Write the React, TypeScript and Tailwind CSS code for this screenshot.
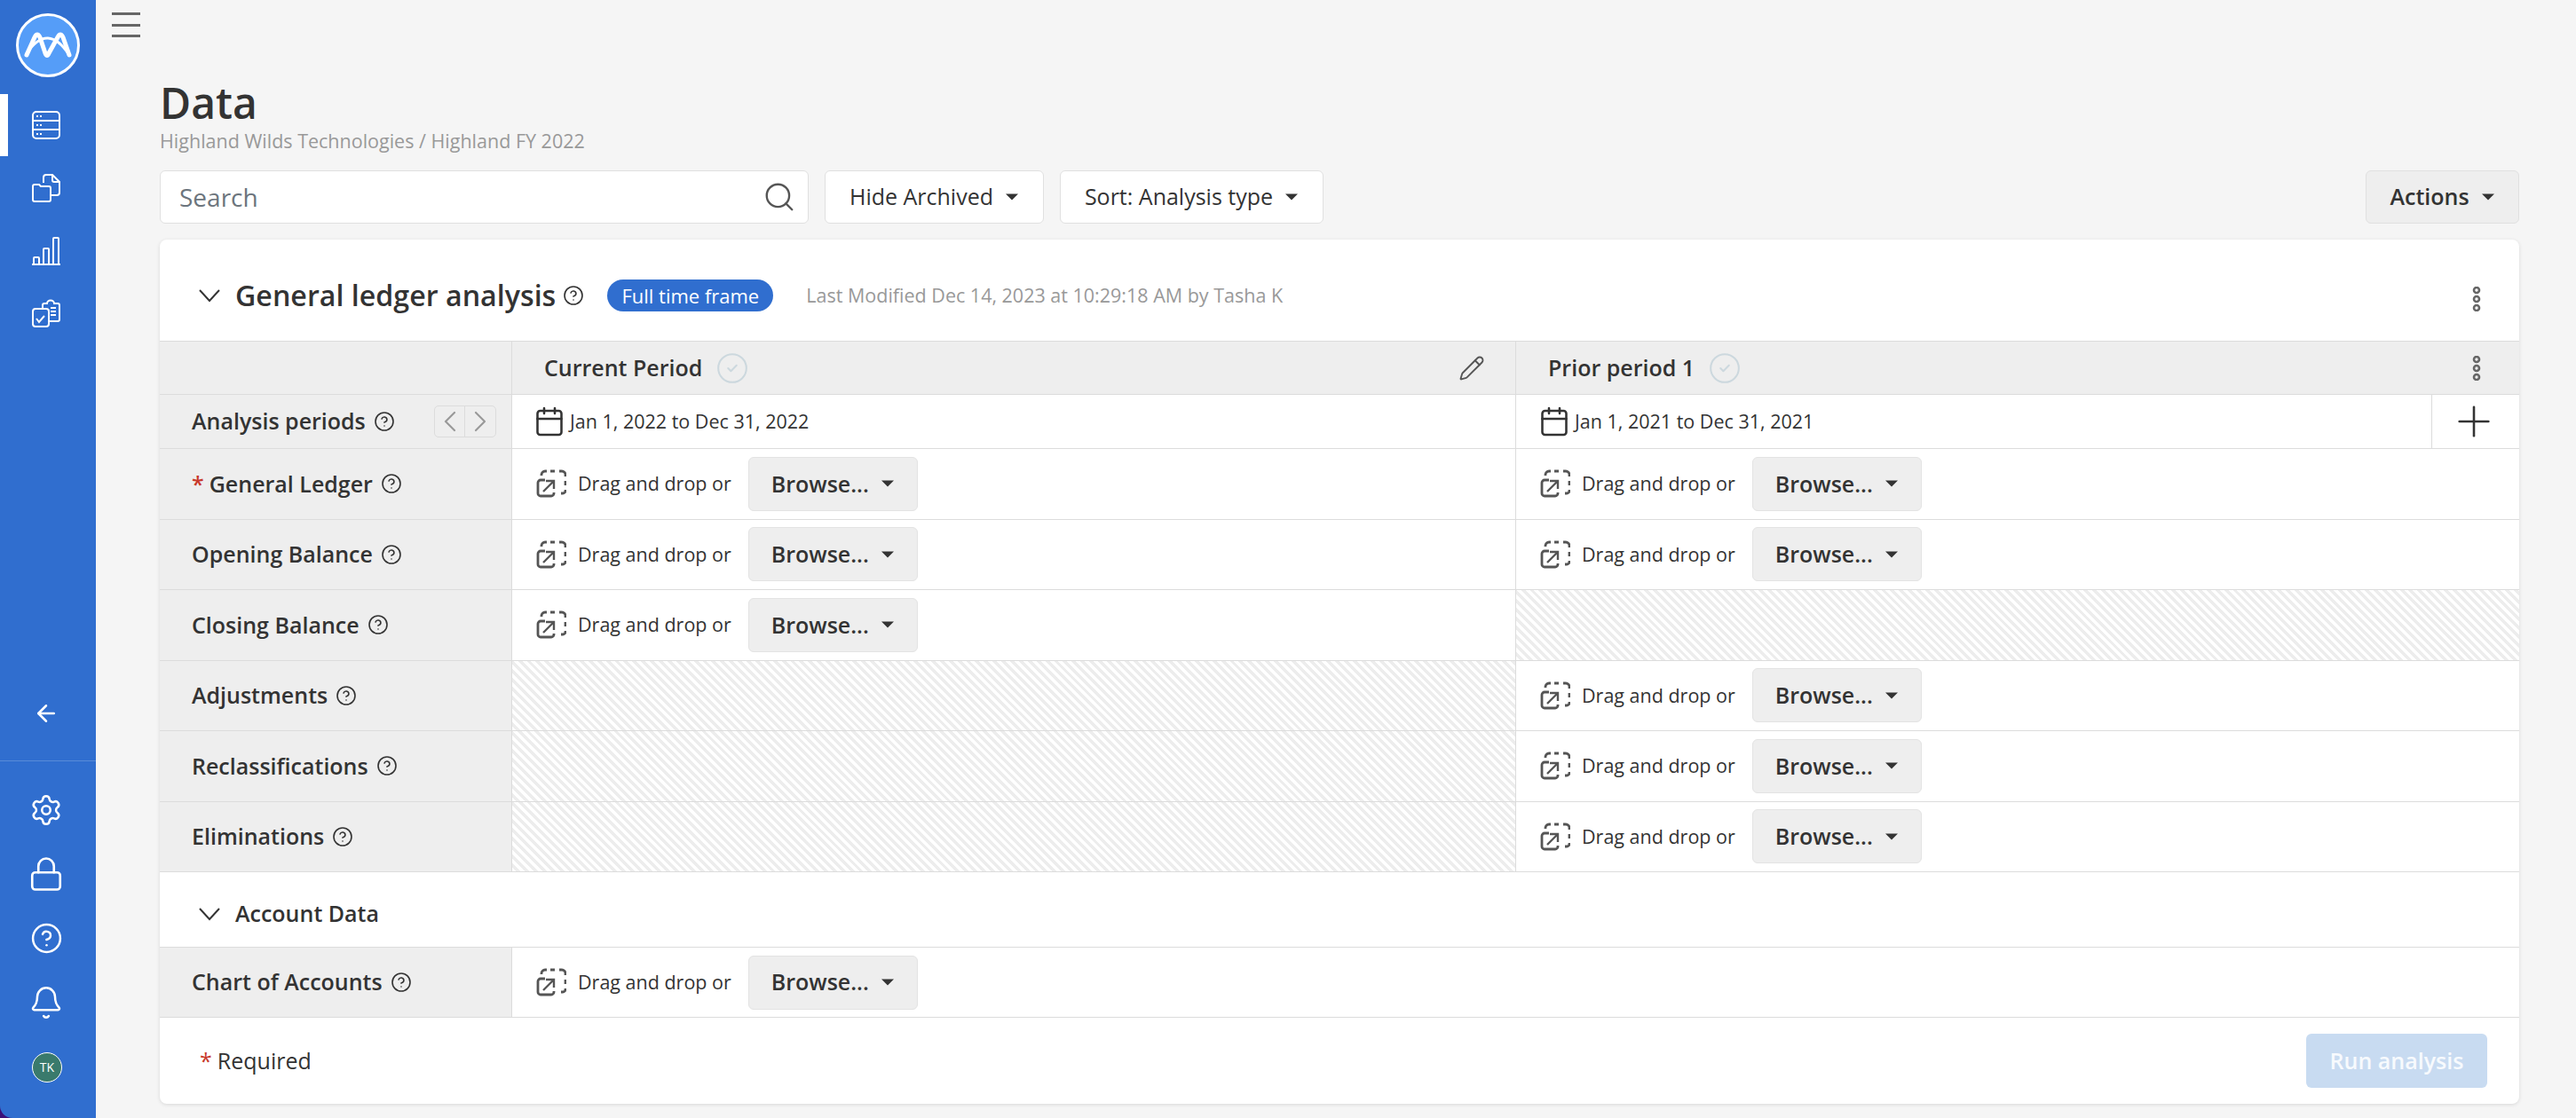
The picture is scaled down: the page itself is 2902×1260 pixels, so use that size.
import { ArrowLeft, Bell, Calendar, ChevronLeft, ChevronRight, CircleCheck, CircleHelp, Lock, Pencil, Plus, Search, Settings } from "lucide-react";

const Caret = () => (
  <svg width="16" height="8" viewBox="0 0 16 8" className="shrink-0">
    <polygon points="1,0.5 15,0.5 8,7.5" fill="#333" />
  </svg>
);

const Chevron = () => (
  <svg width="24" height="16" viewBox="0 0 24 16" fill="none" stroke="#333" strokeWidth="2" className="shrink-0">
    <polyline points="1,2 12,14 23,2" />
  </svg>
);

const Kebab = () => (
  <svg width="10" height="28" viewBox="0 0 10 28" fill="none" stroke="#666" strokeWidth="2.6" className="shrink-0">
    <circle cx="5" cy="4" r="3" />
    <circle cx="5" cy="14" r="3" />
    <circle cx="5" cy="24" r="3" />
  </svg>
);

const Help = () => <CircleHelp size={24} strokeWidth={1.6} color="#333" className="shrink-0" />;

const DropIcon = () => (
  <svg width="34" height="32" viewBox="0 0 34 32" fill="none" stroke="#555" strokeWidth="2.8" className="shrink-0">
    <path d="M6 7V6a4 4 0 0 1 4-4h2M16 2h5M26 2h3a4 4 0 0 1 4 4v2M33 13v5M33 23v1a3 3 0 0 1-3 3h-2" />
    <path d="M10 12H5a3 3 0 0 0-3 3v12a3 3 0 0 0 3 3h12a3 3 0 0 0 3-3v-1" />
    <path d="M8 25L20 13M11 13h9v9" strokeWidth="2.4" />
  </svg>
);

const Drop = () => (
  <div className="flex items-center">
    <DropIcon />
    <span className="ml-[13px] text-[21.5px] text-[#333]">Drag and drop or</span>
    <button className="ml-[19px] flex h-[61px] w-[191px] items-center justify-center gap-[13px] rounded-[6px] border border-[#e3e3e3] bg-[#eeeeee] text-[25px] font-semibold text-[#333]">
      Browse...
      <Caret />
    </button>
  </div>
);

const Hatch = () => (
  <div className="h-full w-full bg-[repeating-linear-gradient(45deg,#ffffff_0px,#ffffff_3.5px,#ededed_3.5px,#ededed_7px)]" />
);

const Cell = ({ kind }: { kind: string }) => {
  if (kind === "hatch") return <div className="h-full border-r border-[#dcdcdc] last:border-r-0"><Hatch /></div>;
  return (
    <div className="flex h-full items-center border-r border-[#dcdcdc] pl-[27px] last:border-r-0">
      <Drop />
    </div>
  );
};

const Label = ({ text, required }: { text: string; required?: boolean }) => (
  <div className="flex h-full items-center border-r border-[#dcdcdc] bg-[#eeeeee] pl-[36px] text-[25px] font-semibold text-[#333]">
    {required && <span className="mr-[6px] text-[#c8392b]">*</span>}
    {text}
    <span className="ml-[9px]"><Help /></span>
  </div>
);

const rows = [
  { label: "General Ledger", required: true, a: "drop", b: "drop" },
  { label: "Opening Balance", a: "drop", b: "drop" },
  { label: "Closing Balance", a: "drop", b: "hatch" },
  { label: "Adjustments", a: "hatch", b: "drop" },
  { label: "Reclassifications", a: "hatch", b: "drop" },
  { label: "Eliminations", a: "hatch", b: "drop" },
];

const PeriodDate = ({ text }: { text: string }) => (
  <div className="flex items-center gap-[5px] text-[21.5px] text-[#333]">
    <Calendar size={36} strokeWidth={1.7} color="#333" className="shrink-0" />
    {text}
  </div>
);

const Toolbar = () => (
  <div className="mt-[18px] flex h-[60px] gap-[18px]">
    <div className="flex w-[731px] items-center justify-between rounded-[6px] border border-[#e0e0e0] bg-white pl-[21px] pr-[13px]">
      <span className="text-[28px] text-[#6c757d]">Search</span>
      <Search size={38} strokeWidth={1.5} color="#555" />
    </div>
    <button className="flex w-[247px] items-center justify-center gap-[13px] rounded-[6px] border border-[#e0e0e0] bg-white text-[25px] font-medium text-[#333]">
      Hide Archived
      <Caret />
    </button>
    <button className="flex w-[297px] items-center justify-center gap-[13px] rounded-[6px] border border-[#e0e0e0] bg-white text-[25px] font-medium text-[#333]">
      Sort: Analysis type
      <Caret />
    </button>
    <button className="ml-auto flex w-[173px] items-center justify-center gap-[13px] rounded-[6px] border border-[#e0e0e0] bg-[#eeeeee] text-[25px] font-semibold text-[#333]">
      Actions
      <Caret />
    </button>
  </div>
);

const Card = () => (
  <div className="mt-[18px] h-[974px] rounded-[8px] bg-white shadow-[0_1px_4px_rgba(0,0,0,0.12)]">
    <div className="flex h-[114px] items-center pl-[44px] pr-[43px] pt-[12px]">
      <Chevron />
      <span className="ml-[17px] text-[32.2px] font-semibold text-[#333]">General ledger analysis</span>
      <span className="ml-[8px]"><Help /></span>
      <span className="ml-[26px] flex h-[36px] w-[187px] items-center justify-center rounded-full bg-[#306ecf] text-[22px] text-white">Full time frame</span>
      <span className="ml-[37px] text-[21.5px] text-[#999999]">Last Modified Dec 14, 2023 at 10:29:18 AM by Tasha K</span>
      <span className="ml-auto mt-[8px]"><Kebab /></span>
    </div>

    <div className="grid h-[61px] grid-cols-[397px_1131px_1fr] border-y border-[#dcdcdc] bg-[#eeeeee] text-[25px] font-semibold text-[#333]">
      <div className="border-r border-[#dcdcdc]" />
      <div className="flex items-center border-r border-[#dcdcdc] pl-[36px] pr-[34px]">
        Current Period
        <CircleCheck size={38} strokeWidth={1.3} color="#ccd8de" className="ml-[15px]" />
        <Pencil size={30} strokeWidth={1.5} color="#555" className="ml-auto" />
      </div>
      <div className="flex items-center pl-[36px] pr-[43px]">
        Prior period 1
        <CircleCheck size={38} strokeWidth={1.3} color="#ccd8de" className="ml-[15px]" />
        <span className="ml-auto"><Kebab /></span>
      </div>
    </div>

    <div className="grid h-[61px] grid-cols-[397px_1131px_1fr_98px] border-b border-[#dcdcdc]">
      <div className="flex items-center justify-between border-r border-[#dcdcdc] bg-[#eeeeee] pl-[36px] pr-[17px] text-[25px] font-semibold text-[#333]">
        <span className="flex items-center gap-[9px]">Analysis periods <Help /></span>
        <span className="flex h-[36px] w-[70px] items-center rounded-[5px] border border-[#dcdcdc]">
          <span className="flex h-full w-1/2 min-w-0 items-center justify-center border-r border-[#dcdcdc]"><ChevronLeft size={40} strokeWidth={1.3} color="#999" className="shrink-0" /></span>
          <span className="flex h-full w-1/2 min-w-0 items-center justify-center"><ChevronRight size={40} strokeWidth={1.3} color="#999" className="shrink-0" /></span>
        </span>
      </div>
      <div className="flex items-center border-r border-[#dcdcdc] pl-[24px]"><PeriodDate text="Jan 1, 2022 to Dec 31, 2022" /></div>
      <div className="flex items-center border-r border-[#dcdcdc] pl-[25px]"><PeriodDate text="Jan 1, 2021 to Dec 31, 2021" /></div>
      <div className="flex items-center justify-center pr-[4px]"><Plus size={56} strokeWidth={1.1} color="#333" /></div>
    </div>

    {rows.map((row) => (
      <div key={row.label} className="grid h-[79.5px] grid-cols-[397px_1131px_1fr] border-b border-[#dcdcdc]">
        <Label text={row.label} required={row.required} />
        <Cell kind={row.a} />
        <Cell kind={row.b} />
      </div>
    ))}

    <div className="flex h-[85px] items-center border-b border-[#dcdcdc] pl-[44px] pt-[10px] text-[25px] font-semibold text-[#333]">
      <Chevron />
      <span className="ml-[17px]">Account Data</span>
    </div>

    <div className="grid h-[79px] grid-cols-[397px_1fr] border-b border-[#dcdcdc]">
      <Label text="Chart of Accounts" />
      <Cell kind="drop" />
    </div>

    <div className="flex h-[97px] items-center justify-between pl-[45px] pr-[36px]">
      <span className="text-[25px] text-[#333]"><span className="mr-[6px] text-[#c8392b]">*</span>Required</span>
      <button className="h-[61px] w-[204px] rounded-[6px] bg-[#c8dbf1] text-[25px] font-semibold text-white/85">Run analysis</button>
    </div>
  </div>
);

const DataIcon = () => (
  <svg width="32" height="32" viewBox="0 0 32 32" fill="none" stroke="white" strokeWidth="2">
    <rect x="1" y="1" width="30" height="30" rx="4" />
    <path d="M1 11h30M1 21h30" />
    <path d="M5 6h2M9 6h2M5 16h2M9 16h2M5 26h2M9 26h2" strokeWidth="2" />
  </svg>
);

const FilesIcon = () => (
  <svg width="32" height="32" viewBox="0 0 32 32" fill="none" stroke="white" strokeWidth="2">
    <path d="M3 12h5l2 2h9a2 2 0 0 1 2 2v13a2 2 0 0 1-2 2H3a2 2 0 0 1-2-2V14a2 2 0 0 1 2-2z" />
    <path d="M13 10V4a3 3 0 0 1 3-3h7l8 8v12a3 3 0 0 1-3 3h-6" />
    <path d="M23 1v6a2 2 0 0 0 2 2h6" />
  </svg>
);

const BarsIcon = () => (
  <svg width="32" height="32" viewBox="0 0 32 32" fill="none" stroke="white" strokeWidth="2">
    <path d="M0 31h32" />
    <rect x="2" y="23" width="6" height="8" rx="1" />
    <rect x="13" y="13" width="6" height="18" rx="1" />
    <rect x="24" y="1" width="6" height="30" rx="1" />
  </svg>
);

const TasksIcon = () => (
  <svg width="32" height="32" viewBox="0 0 32 32" fill="none" stroke="white" strokeWidth="2">
    <path d="M12 10V7a2 2 0 0 1 2-2h3a4 3.5 0 0 1 8 0h4a2 2 0 0 1 2 2v16a2 2 0 0 1-2 2h-9" />
    <rect x="1" y="11" width="18" height="20" rx="3" />
    <path d="M5 22l3 4 6-7" />
    <path d="M21 10h6M21 14h6M21 18h6" />
  </svg>
);

const Logo = () => (
  <svg width="72" height="72" viewBox="0 0 72 72" fill="none">
    <circle cx="36" cy="36" r="34.5" fill="#559df8" stroke="white" strokeWidth="3" />
    <path d="M12 47L21 27Q24 21 27 27L33 45Q35 50 37 45L47 27Q50 21 53 27L60 47" stroke="white" strokeWidth="5" strokeLinecap="round" strokeLinejoin="round" />
    <path d="M12 45Q36 10 60 47" stroke="white" strokeWidth="3" strokeLinecap="round" />
  </svg>
);

const Sidebar = () => (
  <div className="h-[1260px] w-[108px] shrink-0 bg-[#3a1078]">
    <div className="flex h-full flex-col rounded-bl-[14px] bg-[#306ecf]">
      <div className="flex h-[106px] items-start justify-center pt-[15px]"><Logo /></div>
      <div className="relative flex h-[70.7px] items-center justify-center pr-[4px]">
        <span className="absolute left-0 top-0 h-[70px] w-[9px] bg-white" />
        <DataIcon />
      </div>
      <div className="flex h-[70.7px] items-center justify-center pr-[4px]"><FilesIcon /></div>
      <div className="flex h-[70.7px] items-center justify-center pr-[4px]"><BarsIcon /></div>
      <div className="flex h-[70.7px] items-center justify-center pr-[4px]"><TasksIcon /></div>
      <div className="flex-1" />
      <div className="flex h-[72px] items-center justify-center pr-[4px]"><ArrowLeft size={30} strokeWidth={2} color="white" /></div>
      <div className="mt-[17px] flex flex-col border-t border-white/20 pb-[21px] pt-[19px]">
        <div className="flex h-[72.5px] items-center justify-center pr-[4px]"><Settings size={38} strokeWidth={1.6} color="white" /></div>
        <div className="flex h-[72.5px] items-center justify-center pr-[4px]"><Lock size={42} strokeWidth={1.5} color="white" /></div>
        <div className="flex h-[72.5px] items-center justify-center pr-[4px]"><CircleHelp size={37} strokeWidth={1.6} color="white" /></div>
        <div className="flex h-[72.5px] items-center justify-center pr-[4px]"><Bell size={40} strokeWidth={1.5} color="white" /></div>
        <div className="flex h-[72.5px] items-center justify-center pr-[2px]">
          <span className="flex h-[34px] w-[34px] items-center justify-center rounded-full border border-white bg-[#3a7a6c] text-[14px] text-white">TK</span>
        </div>
      </div>
    </div>
  </div>
);

export default function App() {
  return (
    <div className="flex h-[1260px] overflow-hidden bg-[#f5f5f5] font-['Open_Sans',sans-serif]">
      <Sidebar />
      <div className="flex-1 pr-[64px]">
        <div className="flex h-[88px] pl-[18px] pt-[14px]">
          <div className="flex h-[28px] w-[32px] flex-col justify-between">
            <span className="h-[3px] bg-[#666]" />
            <span className="h-[3px] bg-[#666]" />
            <span className="h-[3px] bg-[#666]" />
          </div>
        </div>
        <div className="pl-[72px]">
          <h1 className="h-[56px] text-[48px] font-semibold leading-[56px] text-[#333]">Data</h1>
          <div className="h-[30px] text-[21.5px] leading-[30px] text-[#999999]">Highland Wilds Technologies / Highland FY 2022</div>
          <Toolbar />
          <Card />
        </div>
      </div>
    </div>
  );
}
